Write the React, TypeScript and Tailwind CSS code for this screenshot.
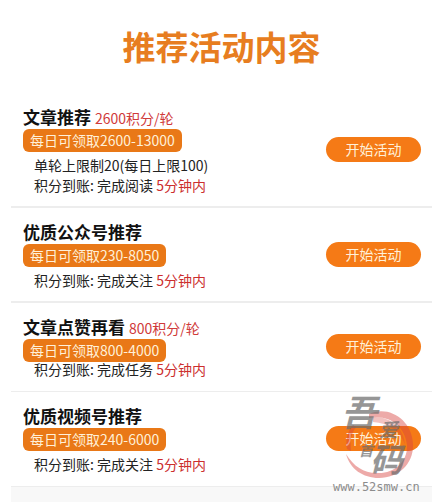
import React from 'react';

type Activity = {
  title: string;
  reward?: string;
  daily: string;
  limit?: string;
  action: string;
  className: string;
};

const activities: Activity[] = [
  {
    title: '文章推荐',
    reward: '2600积分/轮',
    daily: '每日可领取2600-13000',
    limit: '单轮上限制20(每日上限100)',
    action: '完成阅读',
    className: 'pb-[11px] border-b-2',
  },
  {
    title: '优质公众号推荐',
    daily: '每日可领取230-8050',
    action: '完成关注',
    className: 'pb-[11px] border-b-2',
  },
  {
    title: '文章点赞再看',
    reward: '800积分/轮',
    daily: '每日可领取800-4000',
    action: '完成任务',
    className: 'pb-3 border-b',
  },
  {
    title: '优质视频号推荐',
    daily: '每日可领取240-6000',
    action: '完成关注',
    className: 'pb-3 border-b',
  },
];

const ActivityRow = ({ item }: { item: Activity }) => {
  // The task entry has its note tucked right under the badge
  const noteMargin = item.action === '完成任务' ? '-mt-[3px]' : 'mt-[3px]';

  return (
    <li
      className={`flex items-center justify-between pt-[11px] pl-3 pr-[11px] border-[#ededed] ${item.className}`}
    >
      <div>
        <h2 className="flex items-baseline gap-1 h-[25px] text-[17px] leading-[25px] font-bold text-[#111111]">
          {item.title}
          {item.reward && (
            <span className="text-sm font-normal text-[#d03a3a]">{item.reward}</span>
          )}
        </h2>
        <p className="w-fit px-[7px] rounded-md bg-[#e97817] text-sm leading-[23px] text-[#fff0d8]">
          {item.daily}
        </p>
        <div className={`relative pl-[11px] text-sm leading-5 text-[#222222] ${noteMargin}`}>
          {item.limit && <p>{item.limit}</p>}
          <p>
            积分到账: {item.action} <span className="text-[#cc2e2e]">5分钟内</span>
          </p>
        </div>
      </div>
      <button
        type="button"
        className="w-[95px] h-[25px] shrink-0 rounded-full bg-[#f57a16] text-sm leading-[25px] text-[#fff0d8]"
      >
        开始活动
      </button>
    </li>
  );
};

const Watermark = () => (
  <div className="pointer-events-none absolute right-3 -bottom-2 w-[87px]">
    <svg viewBox="0 0 87 92" className="block w-full h-[92px] overflow-visible" aria-label="吾爱首码">
      <g fill="#d9443f" opacity="0.45">
        <path d="M36 27 C56 18 79 33 80 57 C81 76 66 91 46 91 C30 91 17 82 13 67 C21 80 32 87 46 86 C62 86 75 74 74 58 C72 39 56 27 36 31 Z" />
        <path d="M40 30 C58 29 71 42 72 57 C66 44 56 36 40 35 Z" opacity="0.7" />
        <path d="M14 62 C12 52 15 44 20 38 L23 40 C18 47 17 54 18 64 Z" />
      </g>
      <g
        fill="#6b6b6b"
        opacity="0.7"
        fontFamily="'Noto Sans CJK SC', sans-serif"
        fontStyle="italic"
        fontWeight="700"
      >
        <text x="8" y="39" fontSize="36">吾</text>
        <text x="46" y="50" fontSize="19">爱</text>
        <text x="26" y="69" fontSize="14">首</text>
        <text x="37" y="85" fontSize="33">码</text>
      </g>
    </svg>
    <a
      href="#home"
      className="block font-['DejaVu_Sans_Mono',monospace] text-xs leading-4 text-[#8c8c8c]"
    >
      www.52smw.cn
    </a>
  </div>
);

const App = () => {
  return (
    <div className="min-h-screen flex flex-col bg-white pl-[11px] pr-[6px] font-['Noto_Sans_CJK_SC',sans-serif]">
      <h1 className="h-[93px] text-center text-[33px] leading-[93px] font-bold text-[#e77d20]">
        推荐活动内容
      </h1>
      <main className="relative">
        <ul>
          {activities.map((item) => (
            <ActivityRow key={item.title} item={item} />
          ))}
        </ul>
        <Watermark />
      </main>
      <footer className="grow bg-[#f8f8f8]" />
    </div>
  );
};

export default App;
